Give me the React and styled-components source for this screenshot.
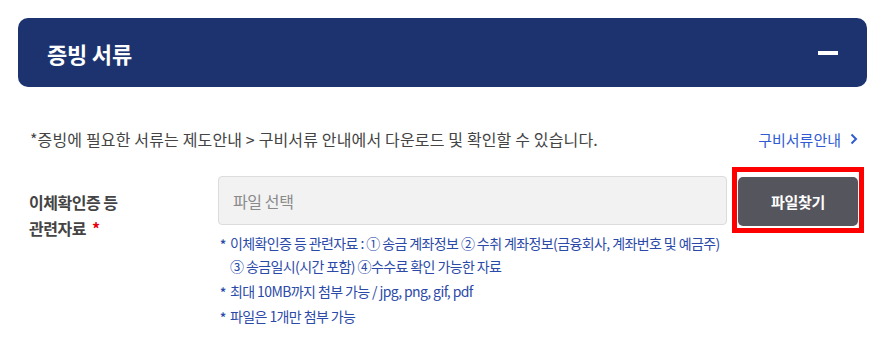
import React from "react";
import styled, { createGlobalStyle } from "styled-components";

const GlobalStyle = createGlobalStyle`
  body {
    margin: 0;
    background: #ffffff;
    font-family: "Noto Sans CJK KR", "Noto Sans", sans-serif;
  }
`;

const Page = styled.div`
  padding: 18px 18px 0 18px;
`;

const Header = styled.div`
  height: 69px;
  background: #1c3370;
  border-radius: 10px;
  display: flex;
  align-items: center;
  justify-content: space-between;
  padding: 0 29px 0 29px;
`;

const Title = styled.h2`
  margin: 0;
  color: #ffffff;
  font-size: 22px;
  font-weight: 700;
  letter-spacing: -0.2px;
`;

const Minus = styled.button`
  width: 20px;
  height: 4px;
  padding: 0;
  border: none;
  background: #ffffff;
`;

const Notice = styled.div`
  display: flex;
  justify-content: space-between;
  align-items: center;
  margin: 41px 9px 0 12px;
  height: 22px;
`;

const NoticeText = styled.p`
  margin: 0;
  font-size: 16px;
  color: #444444;
  letter-spacing: 0.15px;
`;

const GuideLink = styled.a`
  display: flex;
  align-items: center;
  gap: 9px;
  font-size: 15px;
  color: #2f5bd3;
  text-decoration: none;
  letter-spacing: 0;
`;

const FormRow = styled.div`
  display: flex;
  margin: 26px 0 0 11px;
`;

const Label = styled.div`
  width: 189px;
  padding-top: 13px;
  font-size: 16px;
  font-weight: 700;
  line-height: 26px;
  color: #444444;
  letter-spacing: -0.5px;
`;

const Required = styled.span`
  color: #e60012;
  margin-left: 6px;
`;

const Field = styled.div`
  flex: 0 0 auto;
`;

const InputRow = styled.div`
  display: flex;
  gap: 11px;
`;

const FileInput = styled.div`
  width: 493px;
  height: 47px;
  padding: 0 0 0 14px;
  display: flex;
  align-items: center;
  background: #f2f2f2;
  border: 1px solid #dcdcdc;
  border-radius: 4px;
  font-size: 16px;
  color: #8a8a8a;
  letter-spacing: -0.4px;
`;

const ButtonWrap = styled.div`
  position: relative;
  margin-top: 1px;
`;

const FindButton = styled.button`
  width: 120px;
  height: 49px;
  border: none;
  border-radius: 5px;
  background: #55555e;
  color: #ffffff;
  font-family: inherit;
  font-size: 15px;
  font-weight: 700;
  letter-spacing: -0.3px;
`;

const Highlight = styled.span`
  position: absolute;
  top: -10px;
  left: -6px;
  right: -6px;
  bottom: -7px;
  border: 5px solid #ff0000;
  pointer-events: none;
`;

const HelpList = styled.ul`
  list-style: none;
  margin: 6px 0 0 0;
  padding: 0 0 0 2px;
`;

const HelpItem = styled.li`
  position: relative;
  padding-left: 10px;
  margin-bottom: 2px;
  font-size: 14px;
  line-height: 23px;
  color: #2b4aa8;
  letter-spacing: -0.6px;

  &::before {
    content: "*";
    position: absolute;
    left: 0;
    top: 0;
    font-size: 12px;
    font-weight: 700;
  }
`;

const Chevron = () => (
  <svg width="8" height="12" viewBox="0 0 8 12" fill="none">
    <path d="M1.5 1.5L6 6l-4.5 4.5" stroke="#2f5bd3" strokeWidth="2" />
  </svg>
);

export default function App() {
  return (
    <>
      <GlobalStyle />
      <Page>
        <Header>
          <Title>증빙 서류</Title>
          <Minus aria-label="접기" />
        </Header>

        <Notice>
          <NoticeText>
            *증빙에 필요한 서류는 제도안내 &gt; 구비서류 안내에서 다운로드 및 확인할 수 있습니다.
          </NoticeText>
          <GuideLink href="#">
            구비서류안내 <Chevron />
          </GuideLink>
        </Notice>

        <FormRow>
          <Label>
            이체확인증 등
            <br />
            관련자료<Required>*</Required>
          </Label>
          <Field>
            <InputRow>
              <FileInput>파일 선택</FileInput>
              <ButtonWrap>
                <FindButton>파일찾기</FindButton>
                <Highlight />
              </ButtonWrap>
            </InputRow>
            <HelpList>
              <HelpItem>
                이체확인증 등 관련자료 : ① 송금 계좌정보 ② 수취 계좌정보(금융회사, 계좌번호 및 예금주)
                <br />③ 송금일시(시간 포함) ④수수료 확인 가능한 자료
              </HelpItem>
              <HelpItem>최대 10MB까지 첨부 가능 / jpg, png, gif, pdf</HelpItem>
              <HelpItem>파일은 1개만 첨부 가능</HelpItem>
            </HelpList>
          </Field>
        </FormRow>
      </Page>
    </>
  );
}
